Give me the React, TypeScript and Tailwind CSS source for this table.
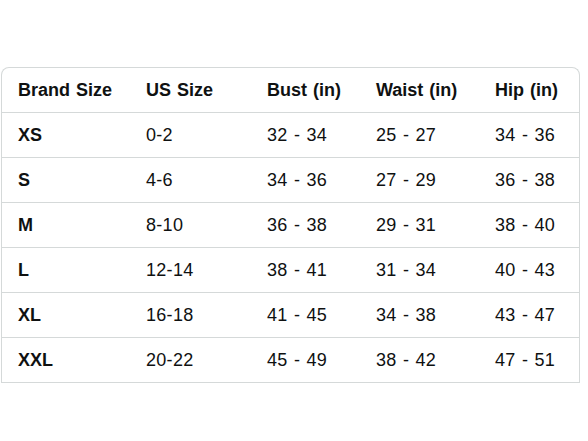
import React from "react";

const header = ["Brand Size", "US Size", "Bust (in)", "Waist (in)", "Hip (in)"];
const rows = [
  ["XS", "0-2", "32 - 34", "25 - 27", "34 - 36"],
  ["S", "4-6", "34 - 36", "27 - 29", "36 - 38"],
  ["M", "8-10", "36 - 38", "29 - 31", "38 - 40"],
  ["L", "12-14", "38 - 41", "31 - 34", "40 - 43"],
  ["XL", "16-18", "41 - 45", "34 - 38", "43 - 47"],
  ["XXL", "20-22", "45 - 49", "38 - 42", "47 - 51"],
];

const cols = "grid grid-cols-[128px_121px_109px_119px_1fr]";

export default function App() {
  return (
    <div className="w-[588px] h-[441px] bg-white pt-[67px] pl-[1px] text-[#0f1111] [font-family:'Liberation_Sans',Arial,sans-serif] text-[18px]">
      <div className="w-[579px] border-l border-r border-t border-[#d5d9d9] rounded-t-[8px]">
        <div className={`${cols} h-[45px] items-center border-b border-[#d5d9d9] font-bold`}>
          {header.map((h) => (
            <div key={h} className="pl-[16px] whitespace-nowrap [word-spacing:1px]">{h}</div>
          ))}
        </div>
        {rows.map((r) => (
          <div key={r[0]} className={`${cols} h-[45px] items-center border-b border-[#d5d9d9]`}>
            {r.map((c, i) => (
              <div
                key={i}
                className={`pl-[16px] whitespace-nowrap ${i === 0 ? "font-bold" : "tracking-[0.3px] [word-spacing:1px]"}`}
              >
                {c}
              </div>
            ))}
          </div>
        ))}
      </div>
    </div>
  );
}
